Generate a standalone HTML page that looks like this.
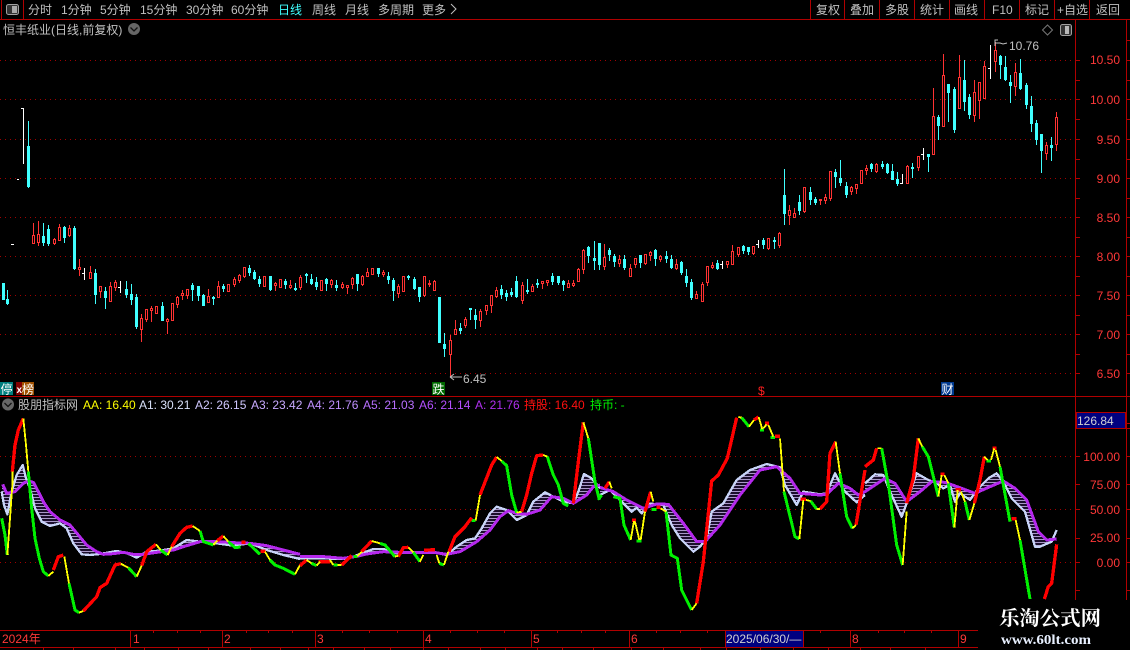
<!DOCTYPE html>
<html lang="zh"><head><meta charset="utf-8"><title>恒丰纸业</title>
<style>
html,body{margin:0;padding:0;background:#000;width:1130px;height:650px;overflow:hidden}
svg{display:block}
text{font-family:"Liberation Sans","WenQuanYi Zen Hei","Noto Sans CJK SC",sans-serif;font-size:12px;fill:#c0c0c0}
.r{fill:#ff3838;text-anchor:end}
.d{fill:#ff3838}
</style></head><body>
<svg width="1130" height="650" viewBox="0 0 1130 650" xmlns="http://www.w3.org/2000/svg">
<defs>
<pattern id="st" patternUnits="userSpaceOnUse" width="9" height="9"><rect width="9" height="9" fill="#1a0e2c"/><rect width="9" height="3" fill="#a898c8"/></pattern>
</defs>
<rect width="1130" height="650" fill="#000"/>

<!-- toolbar -->
<g fill="none" stroke="#b00000" shape-rendering="crispEdges">
<path d="M0 19.500H1130M1.500 0V19M23.500 0V19M810.500 0V19M844.500 0V19M879.500 0V19M914.500 0V19M949.500 0V19M984.500 0V19M1019.500 0V19M1054.500 0V19M1089.500 0V19"/>
</g>
<rect x="6.500" y="4.500" width="12" height="10" rx="2" fill="#333" stroke="#a0a0a0"/>
<rect x="12" y="6" width="5" height="7" fill="#a8a8a8"/>
<text x="28" y="14">分时</text><text x="61" y="14">1分钟</text><text x="100" y="14">5分钟</text><text x="140" y="14">15分钟</text><text x="186" y="14">30分钟</text><text x="231" y="14">60分钟</text>
<text x="278" y="14" style="fill:#40ffff">日线</text><text x="312" y="14">周线</text><text x="345" y="14">月线</text><text x="378" y="14">多周期</text><text x="422" y="14">更多</text>
<path d="M451 4l5 5-5 5" fill="none" stroke="#c0c0c0"/>
<text x="816" y="14">复权</text><text x="850" y="14">叠加</text><text x="885" y="14">多股</text><text x="920" y="14">统计</text><text x="954" y="14">画线</text><text x="992" y="14">F10</text><text x="1025" y="14">标记</text><text x="1057" y="14">+自选</text><text x="1096" y="14">返回</text>

<!-- title -->
<text x="3" y="34">恒丰纸业(日线,前复权)</text>
<circle cx="134" cy="29" r="6" fill="#666"/><path d="M130.500 27.500l3.500 3.500 3.500-3.500" fill="none" stroke="#111" stroke-width="1.300"/>
<path d="M1047.500 25l5 5-5 5-5-5z" fill="none" stroke="#777"/>
<rect x="1060.500" y="24.500" width="11" height="11" rx="2" fill="#333" stroke="#a0a0a0"/><rect x="1065" y="26" width="4" height="8" fill="#b8b8b8"/>

<!-- grid upper -->
<path d="M0 60.500H1075M0 99.500H1075M0 139.500H1075M0 178.500H1075M0 217.500H1075M0 256.500H1075M0 295.500H1075M0 334.500H1075M0 373.500H1075" stroke="#a00000" stroke-dasharray="1 4" fill="none" shape-rendering="crispEdges"/>
<!-- grid lower -->
<path d="M0 456.500H1075M0 509.500H1075M0 562.500H1075" stroke="#a00000" stroke-dasharray="1 4" fill="none" shape-rendering="crispEdges"/>

<!-- axes -->
<g fill="none" stroke="#b00000" shape-rendering="crispEdges">
<path d="M1075.500 20V600M1126.500 20V600M0 396.500H1130"/>
<path d="M1075 60.500h5M1075 80.500h5M1075 99.500h5M1075 119.500h5M1075 139.500h5M1075 159.500h5M1075 178.500h5M1075 198.500h5M1075 217.500h5M1075 237.500h5M1075 256.500h5M1075 276.500h5M1075 295.500h5M1075 315.500h5M1075 334.500h5M1075 354.500h5M1075 373.500h5M1075 456.500h5M1075 484.500h5M1075 509.500h5M1075 538.500h5M1075 562.500h5M1075 590.500h5"/>
<path d="M1126 40.500h4M1126 60.500h4M1126 80.500h4M1126 99.500h4M1126 119.500h4M1126 139.500h4M1126 159.500h4M1126 178.500h4M1126 198.500h4M1126 217.500h4M1126 237.500h4M1126 256.500h4M1126 276.500h4M1126 295.500h4M1126 315.500h4M1126 334.500h4M1126 354.500h4M1126 373.500h4M1126 423.500h4M1126 428.500h4M1126 456.500h4M1126 484.500h4M1126 509.500h4M1126 538.500h4M1126 562.500h4M1126 590.500h4"/>
</g>
<text class="r" x="1120" y="64">10.50</text><text class="r" x="1120" y="104">10.00</text><text class="r" x="1120" y="144">9.50</text><text class="r" x="1120" y="183">9.00</text><text class="r" x="1120" y="222">8.50</text><text class="r" x="1120" y="261">8.00</text><text class="r" x="1120" y="300">7.50</text><text class="r" x="1120" y="339">7.00</text><text class="r" x="1120" y="378">6.50</text>
<rect x="1076.500" y="412.500" width="49" height="16" fill="#000080" stroke="#b00000" shape-rendering="crispEdges"/>
<text x="1077" y="425" style="fill:#d0d0d0">126.84</text>
<text class="r" x="1120" y="461">100.00</text><text class="r" x="1120" y="489">75.00</text><text class="r" x="1120" y="514">50.00</text><text class="r" x="1120" y="542">25.00</text><text class="r" x="1120" y="567">0.00</text>

<!-- candles -->
<g shape-rendering="crispEdges">
<path fill="none" stroke="#ff3232" d="M33.500 223V244M38.500 221V246M54.500 238V245M59.500 224V241M69.500 225V237M79.500 259V276M90.500 266V279M100.500 286V298M110.500 282V302M115.500 280V291M141.500 314V342M146.500 309V322M151.500 306V322M156.500 306V314M167.500 318V334M172.500 303V321M177.500 296V308M182.500 290V300M187.500 289V299M208.500 289V303M218.500 281V298M228.500 284V292M234.500 277V287M239.500 274V283M244.500 267V278M264.500 276V287M275.500 282V291M280.500 279V288M290.500 280V289M300.500 275V290M321.500 280V291M331.500 279V288M342.500 282V289M347.500 285V294M352.500 277V289M362.500 275V286M367.500 268V277M372.500 268V275M383.500 270V277M398.500 284V298M403.500 276V292M424.500 276V297M429.500 280V287M434.500 280V291M450.500 335V377M455.500 320V335M465.500 317V328M480.500 309V327M486.500 305V315M491.500 295V313M496.500 287V298M522.500 282V304M532.500 284V292M542.500 281V289M547.500 280V286M568.500 280V288M573.500 280V287M578.500 268V282M583.500 249V274M604.500 244V270M619.500 255V267M630.500 264V277M635.500 258V268M645.500 254V265M650.500 251V261M660.500 255V262M676.500 259V270M696.500 291V299M702.500 282V302M707.500 266V286M712.500 262V269M727.500 261V268M732.500 245V265M738.500 247V257M753.500 246V255M768.500 238V250M779.500 232V248M789.500 205V225M794.500 208V218M804.500 187V213M820.500 199V205M825.500 194V204M830.500 171V201M851.500 186V195M856.500 184V194M861.500 170V184M866.500 165V175M876.500 163V173M907.500 165V184M918.500 156V171M933.500 88V155M943.500 54V127M959.500 55V109M974.500 80V122M979.500 82V119M984.500 61V99M995.500 42V72M1015.500 63V96M1046.500 142V160M1056.500 112V151"/>
<path fill="#000" stroke="#ff3232" d="M32.500 235.500h2v8h-2zM37.500 234.500h2v8h-2zM53.500 239.500h2v4h-2zM58.500 227.500h2v13h-2zM68.500 228.500h2v7h-2zM78.500 267.500h2v2h-2zM89.500 272.500h2v6h-2zM99.500 286.500h2v5h-2zM109.500 286.500h2v15h-2zM114.500 282.500h2v5h-2zM140.500 318.500h2v11h-2zM145.500 309.500h2v10h-2zM150.500 308.500h2v2h-2zM155.500 306.500h2v7h-2zM166.500 319.500h2v2h-2zM171.500 303.500h2v17h-2zM176.500 297.500h2v7h-2zM181.500 293.500h2v2h-2zM186.500 289.500h2v6h-2zM207.500 296.500h2v6h-2zM217.500 286.500h2v11h-2zM227.500 284.500h2v7h-2zM233.500 279.500h2v5h-2zM238.500 275.500h2v5h-2zM243.500 267.500h2v9h-2zM263.500 276.500h2v10h-2zM274.500 283.500h2v2h-2zM279.500 279.500h2v8h-2zM289.500 285.500h2v2h-2zM299.500 277.500h2v10h-2zM320.500 280.500h2v10h-2zM330.500 280.500h2v4h-2zM341.500 284.500h2v3h-2zM346.500 285.500h2v2h-2zM351.500 278.500h2v6h-2zM361.500 276.500h2v8h-2zM366.500 272.500h2v4h-2zM371.500 268.500h2v6h-2zM382.500 272.500h2v2h-2zM397.500 286.500h2v7h-2zM402.500 276.500h2v15h-2zM423.500 276.500h2v19h-2zM428.500 283.500h2v1h-2zM433.500 281.500h2v9h-2zM449.500 340.500h2v14h-2zM454.500 329.500h2v5h-2zM464.500 319.500h2v6h-2zM479.500 311.500h2v9h-2zM485.500 305.500h2v5h-2zM490.500 295.500h2v10h-2zM495.500 290.500h2v6h-2zM521.500 285.500h2v15h-2zM531.500 286.500h2v5h-2zM541.500 281.500h2v2h-2zM546.500 280.500h2v2h-2zM567.500 283.500h2v4h-2zM572.500 283.500h2v2h-2zM577.500 269.500h2v12h-2zM582.500 250.500h2v19h-2zM603.500 257.500h2v9h-2zM618.500 259.500h2v4h-2zM629.500 268.500h2v8h-2zM634.500 258.500h2v6h-2zM644.500 254.500h2v9h-2zM649.500 252.500h2v3h-2zM659.500 256.500h2v3h-2zM675.500 264.500h2v4h-2zM695.500 294.500h2v4h-2zM701.500 284.500h2v17h-2zM706.500 266.500h2v16h-2zM711.500 265.500h2v2h-2zM726.500 261.500h2v3h-2zM731.500 251.500h2v13h-2zM737.500 247.500h2v7h-2zM752.500 246.500h2v7h-2zM767.500 238.500h2v10h-2zM778.500 233.500h2v12h-2zM788.500 210.500h2v5h-2zM793.500 213.500h2v4h-2zM803.500 187.500h2v24h-2zM819.500 199.500h2v1h-2zM824.500 197.500h2v3h-2zM829.500 171.500h2v27h-2zM850.500 187.500h2v4h-2zM855.500 184.500h2v4h-2zM860.500 170.500h2v13h-2zM865.500 168.500h2v2h-2zM875.500 164.500h2v7h-2zM906.500 166.500h2v17h-2zM917.500 156.500h2v11h-2zM932.500 116.500h2v38h-2zM942.500 75.500h2v51h-2zM958.500 77.500h2v31h-2zM973.500 92.500h2v23h-2zM978.500 82.500h2v18h-2zM983.500 66.500h2v32h-2zM994.500 50.500h2v11h-2zM1014.500 72.500h2v14h-2zM1045.500 145.500h2v8h-2zM1055.500 117.500h2v27h-2z"/>
<path fill="none" stroke="#40ffff" d="M3.500 283V300M7.500 290V305M28.500 121V188M43.500 223V246M48.500 225V246M64.500 226V243M74.500 226V270M95.500 269V304M105.500 287V309M126.500 281V298M131.500 284V305M136.500 294V329M162.500 302V321M192.500 283V301M198.500 286V301M203.500 294V306M213.500 296V305M223.500 284V292M249.500 265V276M254.500 270V280M259.500 276V287M270.500 276V291M285.500 279V289M295.500 283V291M306.500 273V283M311.500 274V285M316.500 277V290M326.500 278V291M336.500 280V291M357.500 274V291M378.500 268V277M388.500 272V284M393.500 278V301M408.500 275V280M414.500 277V290M419.500 287V302M439.500 297V343M444.500 333V357M460.500 323V334M470.500 308V320M475.500 309V329M501.500 285V299M506.500 290V301M511.500 288V297M516.500 276V298M527.500 279V294M537.500 279V288M552.500 273V285M558.500 276V285M563.500 280V291M588.500 246V263M594.500 241V270M599.500 243V270M609.500 248V261M614.500 254V267M624.500 255V270M640.500 255V268M655.500 249V266M666.500 251V263M671.500 255V269M681.500 261V275M686.500 269V287M691.500 279V300M717.500 260V270M743.500 245V254M748.500 247V255M763.500 238V249M774.500 237V249M784.500 169V225M799.500 195V215M810.500 187V205M815.500 197V205M835.500 169V188M840.500 160V186M846.500 182V198M871.500 163V172M882.500 161V169M887.500 163V174M892.500 164V180M897.500 172V186M912.500 163V178M928.500 154V172M938.500 115V140M948.500 84V122M954.500 87V133M964.500 60V111M969.500 94V119M1000.500 55V79M1005.500 56V81M1010.500 75V103M1020.500 59V90M1026.500 83V109M1031.500 96V132M1036.500 120V145M1041.500 134V173M1051.500 137V161"/>
<path fill="#40ffff" stroke="#40ffff" d="M2.500 283.500h2v16h-2zM6.500 299.500h2v4h-2zM27.500 146.500h2v40h-2zM42.500 236.500h2v6h-2zM47.500 229.500h2v14h-2zM63.500 227.500h2v10h-2zM73.500 228.500h2v40h-2zM94.500 273.500h2v21h-2zM104.500 291.500h2v6h-2zM125.500 289.500h2v5h-2zM130.500 294.500h2v5h-2zM135.500 297.500h2v29h-2zM161.500 306.500h2v14h-2zM191.500 285.500h2v4h-2zM197.500 286.500h2v9h-2zM202.500 295.500h2v10h-2zM212.500 297.500h2v1h-2zM222.500 286.500h2v2h-2zM248.500 268.500h2v4h-2zM253.500 272.500h2v6h-2zM258.500 279.500h2v4h-2zM269.500 276.500h2v13h-2zM284.500 281.500h2v3h-2zM294.500 288.500h2v1h-2zM305.500 274.500h2v1h-2zM310.500 279.500h2v4h-2zM315.500 282.500h2v4h-2zM325.500 279.500h2v4h-2zM335.500 285.500h2v2h-2zM356.500 274.500h2v9h-2zM377.500 268.500h2v5h-2zM387.500 276.500h2v3h-2zM392.500 280.500h2v10h-2zM407.500 276.500h2v1h-2zM413.500 279.500h2v9h-2zM418.500 287.500h2v9h-2zM438.500 297.500h2v45h-2zM443.500 344.500h2v4h-2zM459.500 328.500h2v2h-2zM469.500 308.500h2v1h-2zM474.500 315.500h2v4h-2zM500.500 289.500h2v5h-2zM505.500 293.500h2v3h-2zM510.500 292.500h2v2h-2zM515.500 281.500h2v15h-2zM526.500 290.500h2v1h-2zM536.500 283.500h2v1h-2zM551.500 276.500h2v5h-2zM557.500 276.500h2v6h-2zM562.500 281.500h2v3h-2zM587.500 247.500h2v8h-2zM593.500 258.500h2v2h-2zM598.500 243.500h2v21h-2zM608.500 250.500h2v4h-2zM613.500 256.500h2v5h-2zM623.500 259.500h2v8h-2zM639.500 255.500h2v7h-2zM654.500 250.500h2v8h-2zM665.500 256.500h2v2h-2zM670.500 259.500h2v8h-2zM680.500 262.500h2v10h-2zM685.500 276.500h2v6h-2zM690.500 282.500h2v15h-2zM716.500 263.500h2v5h-2zM742.500 246.500h2v4h-2zM747.500 247.500h2v4h-2zM762.500 240.500h2v4h-2zM773.500 240.500h2v1h-2zM783.500 195.500h2v18h-2zM798.500 202.500h2v8h-2zM809.500 192.500h2v7h-2zM814.500 199.500h2v3h-2zM834.500 172.500h2v4h-2zM839.500 178.500h2v4h-2zM845.500 186.500h2v8h-2zM870.500 164.500h2v4h-2zM881.500 164.500h2v2h-2zM886.500 164.500h2v8h-2zM891.500 171.500h2v8h-2zM896.500 179.500h2v4h-2zM911.500 167.500h2v1h-2zM927.500 154.500h2v2h-2zM937.500 117.500h2v8h-2zM947.500 84.500h2v8h-2zM953.500 89.500h2v40h-2zM963.500 80.500h2v21h-2zM968.500 97.500h2v17h-2zM999.500 56.500h2v8h-2zM1004.500 67.500h2v12h-2zM1009.500 82.500h2v3h-2zM1019.500 73.500h2v15h-2zM1025.500 85.500h2v19h-2zM1030.500 106.500h2v17h-2zM1035.500 123.500h2v16h-2zM1040.500 134.500h2v16h-2zM1050.500 145.500h2v2h-2z"/>
<path fill="none" stroke="#fff" d="M23.500 108V164M21 108.500h2M11 244.500h3M17 179.500h2M84.500 268V280M82 273.500h2M120.500 281V293M118 287.500h2M722.500 261V269M720 264.500h2M758.500 240V248M756 244.500h2M902.500 174V184M900 183.500h2M923.500 148V160M921 154.500h2M990.500 45V79M988 68.500h2"/>
</g>

<!-- markers -->
<path d="M995 46V40h3M995 43h5l3 1 4-1" fill="none" stroke="#c0c0c0"/>
<text x="1009" y="50">10.76</text>
<path d="M450 377h12M450 377l4-3M450 377l4 3" fill="none" stroke="#c0c0c0"/>
<text x="463" y="383">6.45</text>
<rect x="0" y="382" width="13" height="13" fill="#007f7f"/><text x="0.500" y="393.500" style="fill:#fff">停</text>
<rect x="16" y="382" width="7" height="13" fill="#800000"/><text x="16.500" y="393" style="fill:#fff;font-size:10px;font-weight:700">x</text>
<rect x="22" y="382" width="12" height="13" fill="#a05000"/><text x="22" y="393.500" style="fill:#fff">榜</text>
<rect x="432" y="382" width="13" height="13" fill="#006800"/><text x="432.500" y="393.500" style="fill:#fff">跌</text>
<text x="758" y="395" style="fill:#ff2020;font-size:12px">$</text>
<rect x="941" y="382" width="13" height="13" fill="#003a90"/><text x="941.500" y="393.500" style="fill:#fff">财</text>

<!-- lower header -->
<circle cx="8" cy="404.500" r="6" fill="#666"/><path d="M4.500 403l3.500 3.500 3.500-3.500" fill="none" stroke="#111" stroke-width="1.300"/>
<text x="18" y="409">股朋指标网</text>
<text x="83" y="409" style="fill:#ffff00">AA: 16.40</text>
<text x="139" y="409" style="fill:#d8e0f8">A1: 30.21</text>
<text x="195" y="409" style="fill:#d0c8ff">A2: 26.15</text>
<text x="251" y="409" style="fill:#c8aaff">A3: 23.42</text>
<text x="307" y="409" style="fill:#c090ff">A4: 21.76</text>
<text x="363" y="409" style="fill:#b870ff">A5: 21.03</text>
<text x="419" y="409" style="fill:#b450ff">A6: 21.14</text>
<text x="475" y="409" style="fill:#b030f0">A: 21.76</text>
<text x="524" y="409" style="fill:#ff1010">持股: 16.40</text>
<text x="590" y="409" style="fill:#00f000">持币: -</text>

<!-- indicator, coordinates in 3x space per section -->
<g fill="none" stroke-linejoin="round" shape-rendering="crispEdges">
<g transform="translate(0 395) scale(.33333)">
<path fill="url(#st)" d="M5 290L12 330 22 358 35 290 50 240 68 210 78 250 90 280 105 340 125 380 150 393 180 385 200 400 220 445 245 478 270 480 300 477 350 468 380 474 410 488 440 470 480 467 520 460 560 435 600 440 650 445 700 452 750 445 800 465 850 480 900 492V478L850 465 800 452 750 445 700 443 650 440 600 440 560 452 520 465 470 472 430 478 400 478 370 472 340 476 310 478 290 470 260 450 235 420 210 390 180 375 150 350 130 320 115 290 100 262 85 258 70 265 45 290 20 295 8 268Z"/>
<path stroke="#c8d4f8" stroke-width="7" d="M5 290L12 330 22 358 35 290 50 240 68 210 78 250 90 280 105 340 125 380 150 393 180 385 200 400 220 445 245 478 270 480 300 477 350 468 380 474 410 488 440 470 480 467 520 460 560 435 600 440 650 445 700 452 750 445 800 465 850 480 900 492"/>
<path stroke="#b428ec" stroke-width="9" d="M8 268L20 295 45 290 70 265 85 258 100 262 115 290 130 320 150 350 180 375 210 390 235 420 260 450 290 470 310 478 340 476 370 472 400 478 430 478 470 472 520 465 560 452 600 440 650 440 700 443 750 445 800 452 850 465 900 478"/>
<path stroke="#00f000" stroke-width="9" d="M5 370L15 420 22 480M85 230L95 340 105 430 118 490 130 530 145 543M207 565L225 645 237 653M385 518L410 545M482 465L503 480M600 408L610 440 640 450M685 440L705 458 722 456M745 445L780 478M810 495L825 510 850 520 885 538"/>
<path stroke="#ff0000" stroke-width="10" d="M37 230L45 150 55 105 70 70M160 525L175 485 190 480M250 648L290 605 300 578 320 565 345 510 362 506M425 512L440 470 468 448M515 455L540 415 560 397 578 393M652 437L670 423M724 442H736M782 469H796"/>
<path stroke="#ffff00" stroke-width="5.500" d="M22 480L30 370 37 270 38 230M70 70L78 150 85 230M145 543L160 530M193 485L207 565M237 653L250 648M362 506L385 518M410 545L425 512M468 448L482 465M503 480L515 455M578 393L600 408M640 450L652 437M670 423L685 440M795 470L810 495M885 538L900 510"/>
</g>
<g transform="translate(300 395) scale(.33333)">
<path fill="url(#st)" d="M0 490L60 490 130 492 160 485 185 475 220 462 250 462 290 475 340 472 400 472 440 480 470 455 500 435 525 430 545 400 570 355 590 335 620 345 650 375 680 360 700 320 735 292 760 305 790 320 820 325 835 290 852 237 875 250 900 280V270L880 275 860 300 820 325 790 310 755 305 720 345 680 358 650 355 625 347 600 365 570 405 530 440 480 470 440 478 400 472 300 472 250 470 200 477 170 484 130 490 60 484 0 484Z"/>
<path stroke="#c8d4f8" stroke-width="7" d="M0 490L60 490 130 492 160 485 185 475 220 462 250 462 290 475 340 472 400 472 440 480 470 455 500 435 525 430 545 400 570 355 590 335 620 345 650 375 680 360 700 320 735 292 760 305 790 320 820 325 835 290 852 237 875 250 900 280"/>
<path stroke="#b428ec" stroke-width="9" d="M0 484L60 484 130 490 170 484 200 477 250 470 300 472 400 472 440 478 480 470 530 440 570 405 600 365 625 347 650 355 680 358 720 345 755 305 790 310 820 325 860 300 880 275 900 270"/>
<path stroke="#00f000" stroke-width="9" d="M35 505L50 512M60 500H85M100 510H112M160 484H172M240 445L255 450 285 485M340 472L360 500M418 505L432 510M515 377H527M605 198L620 212 635 300 650 353M742 185L760 240 775 270 790 325 805 333M865 130L885 260 898 315"/>
<path stroke="#ff0000" stroke-width="10" d="M0 512L20 495M55 500H90M125 510L155 482M185 470L215 438M295 485L310 458 325 457M372 466L405 464M447 470L465 425 495 395 515 368M540 300L575 210 590 186M665 350L680 300 695 235 710 182 730 180M820 325L835 200 850 82"/>
<path stroke="#ffff00" stroke-width="5.500" d="M20 495L35 505M50 512L60 500M90 495L100 510M112 510L125 510M172 484L185 470M215 438L240 445M285 485L295 482M325 457L340 472M360 500L370 480M410 480L418 505M432 510L445 470M527 377L540 300M590 186L605 198M650 353L665 350M730 180L742 185M850 82L865 130"/>
</g>
<g transform="translate(600 395) scale(.33333)">
<path fill="url(#st)" d="M0 300L30 285 60 315 95 350 110 338 125 355 145 325 190 330 215 390 240 430 280 470 300 455 320 430 335 350 370 325 410 255 450 225 500 207 540 217 555 270 590 330 610 290 660 298 680 295 705 235 730 285 770 322 795 300V290L775 300 750 280 715 265 680 298 660 300 600 295 570 250 530 215 480 225 420 300 360 390 315 440 290 440 250 385 205 328 170 327 130 340 80 315 40 290 0 277Z"/>
<path stroke="#c8d4f8" stroke-width="7" d="M0 300L30 285 60 315 95 350 110 338 125 355 145 325 190 330 215 390 240 430 280 470 300 455 320 430 335 350 370 325 410 255 450 225 500 207 540 217 555 270 590 330 610 290 660 298 680 295 705 235 730 285 770 322 795 300"/>
<path stroke="#b428ec" stroke-width="9" d="M0 277L40 290 80 315 130 340 170 327 205 328 250 385 290 440 315 440 360 390 420 300 480 225 530 215 570 250 600 295 660 300 680 298 715 265 750 280 775 300 795 290"/>
<path stroke="#00f000" stroke-width="9" d="M-2 310L5 300M40 305L60 310 72 390 92 435M110 438H125M155 343H170M198 350L213 480 232 490 245 585 275 645M425 68L447 95M480 105H492M512 127H525M552 290L585 425 598 432M632 318L650 342M720 235L740 365 757 400"/>
<path stroke="#ff0000" stroke-width="10" d="M15 280L28 260M96 376H108M135 350L152 290M170 337H182M290 625L310 500 335 258 355 240 382 190 410 68M462 75L476 66M495 85H507M525 124H540M602 313H618M660 342L680 320 690 175 707 140M768 390L795 225"/>
<path stroke="#ffff00" stroke-width="5.500" d="M28 260L35 280M92 435L102 378M105 380L118 435M122 435L135 350M152 290L160 320M182 340L198 350M275 645L290 625M415 66L425 68M447 95L462 75M476 66L487 103M490 100L500 88M505 90L520 125M540 130L552 290M598 432L610 315M618 315L632 318M650 342H660M707 140L720 235M757 400L768 390"/>
</g>
<g transform="translate(865 395) scale(.33333)">
<path fill="url(#st)" d="M0 265L30 238 55 240 75 290 110 365 125 325 155 235 190 255 215 265 235 280 255 270 270 320 285 295 315 315 340 280 370 250 395 235 415 260 440 310 480 350 510 455 525 455 560 440 575 432 545 435 520 410 485 315 450 280 415 258 375 275 330 295 290 280 240 262 200 260 165 290 125 320 90 265 60 250 30 270 0 290Z"/>
<path stroke="#c8d4f8" stroke-width="7" d="M0 265L30 238 55 240 75 290 110 365 125 325 155 235 190 255 215 265 235 280 255 270 270 320 285 295 315 315 340 280 370 250 395 235 415 260 440 310 480 350 510 455 525 455 560 440 575 405"/>
<path stroke="#b428ec" stroke-width="9" d="M0 290L30 270 60 250 90 265 125 320 165 290 200 260 240 262 290 280 330 295 375 275 415 258 450 280 485 315 520 410 545 435 575 432"/>
<path stroke="#00f000" stroke-width="9" d="M50 160L72 280 95 450 113 510M172 155L190 185 220 305M250 265L268 398M300 320L313 375M365 198H378M405 215L435 380M465 435L495 612"/>
<path stroke="#ff0000" stroke-width="10" d="M0 215L25 195 35 160M125 325L145 250 160 130M226 238H238M272 284H288M328 325L345 255 358 185M382 160H394M440 371H454M538 612L550 575 560 565 575 448"/>
<path stroke="#ffff00" stroke-width="5.500" d="M38 160L50 160M113 510L125 350M160 130L172 155M220 305L230 240M238 240L250 265M268 398L278 285M288 290L300 320M313 375L328 325M358 185L368 195M378 195L388 160M392 165L405 215M452 375L465 435"/>
</g>
</g>

<!-- date axis -->
<g fill="none" stroke="#b00000" shape-rendering="crispEdges">
<path d="M0 630.500H978M0 647.500H978"/>
<path d="M130.500 630V647M222.500 630V647M315.500 630V647M423.500 630V647M531.500 630V647M629.500 630V647M725.500 630V647M803.500 630V647M850.500 630V647M958.500 630V647"/>
<path d="M153.500 630v3M177.500 630v3M200.500 630v3M246.500 630v3M268.500 630v3M292.500 630v3M342.500 630v3M369.500 630v3M397.500 630v3M450.500 630v3M477.500 630v3M504.500 630v3M557.500 630v3M581.500 630v3M605.500 630v3M656.500 630v3M680.500 630v3M707.500 630v3M820.500 630v3M878.500 630v3M904.500 630v3M931.500 630v3"/>
<path d="M43.500 647v3M73.500 647v3M115.500 647v3M144.500 647v3M178.500 647v3M208.500 647v3M250.500 647v3M280.500 647v3M308.500 647v3M333.500 647v3M364.500 647v3M390.500 647v3M423.500 647v3M448.500 647v3M480.500 647v3M505.500 647v3M537.500 647v3M562.500 647v3M593.500 647v3M631.500 647v3M663.500 647v3M700.500 647v3M726.500 647v3M760.500 647v3M793.500 647v3M828.500 647v3M860.500 647v3M890.500 647v3M925.500 647v3"/>
</g>
<rect x="726" y="631" width="77" height="16" fill="#000080"/>
<text x="2" y="643" class="d">2024年</text><text x="133" y="643" class="d">1</text><text x="224" y="643" class="d">2</text><text x="317" y="643" class="d">3</text><text x="425" y="643" class="d">4</text><text x="533" y="643" class="d">5</text><text x="631" y="643" class="d">6</text>
<text x="726" y="643" style="fill:#d0d0d0">2025/06/30/—</text>
<text x="852" y="643" class="d">8</text><text x="960" y="643" class="d">9</text>

<!-- watermark -->
<rect x="978" y="600" width="152" height="50" fill="#000"/>
<text x="999" y="625" textLength="102" lengthAdjust="spacingAndGlyphs" style="font-family:'Noto Serif CJK SC','Liberation Serif',serif;font-weight:700;font-size:20px;fill:#fff">乐淘公式网</text>
<text x="1001" y="644" textLength="90" lengthAdjust="spacingAndGlyphs" style="font-family:'Liberation Serif',serif;font-weight:700;font-size:14px;fill:#e8f0ff">www.60lt.com</text>
</svg>
</body></html>
